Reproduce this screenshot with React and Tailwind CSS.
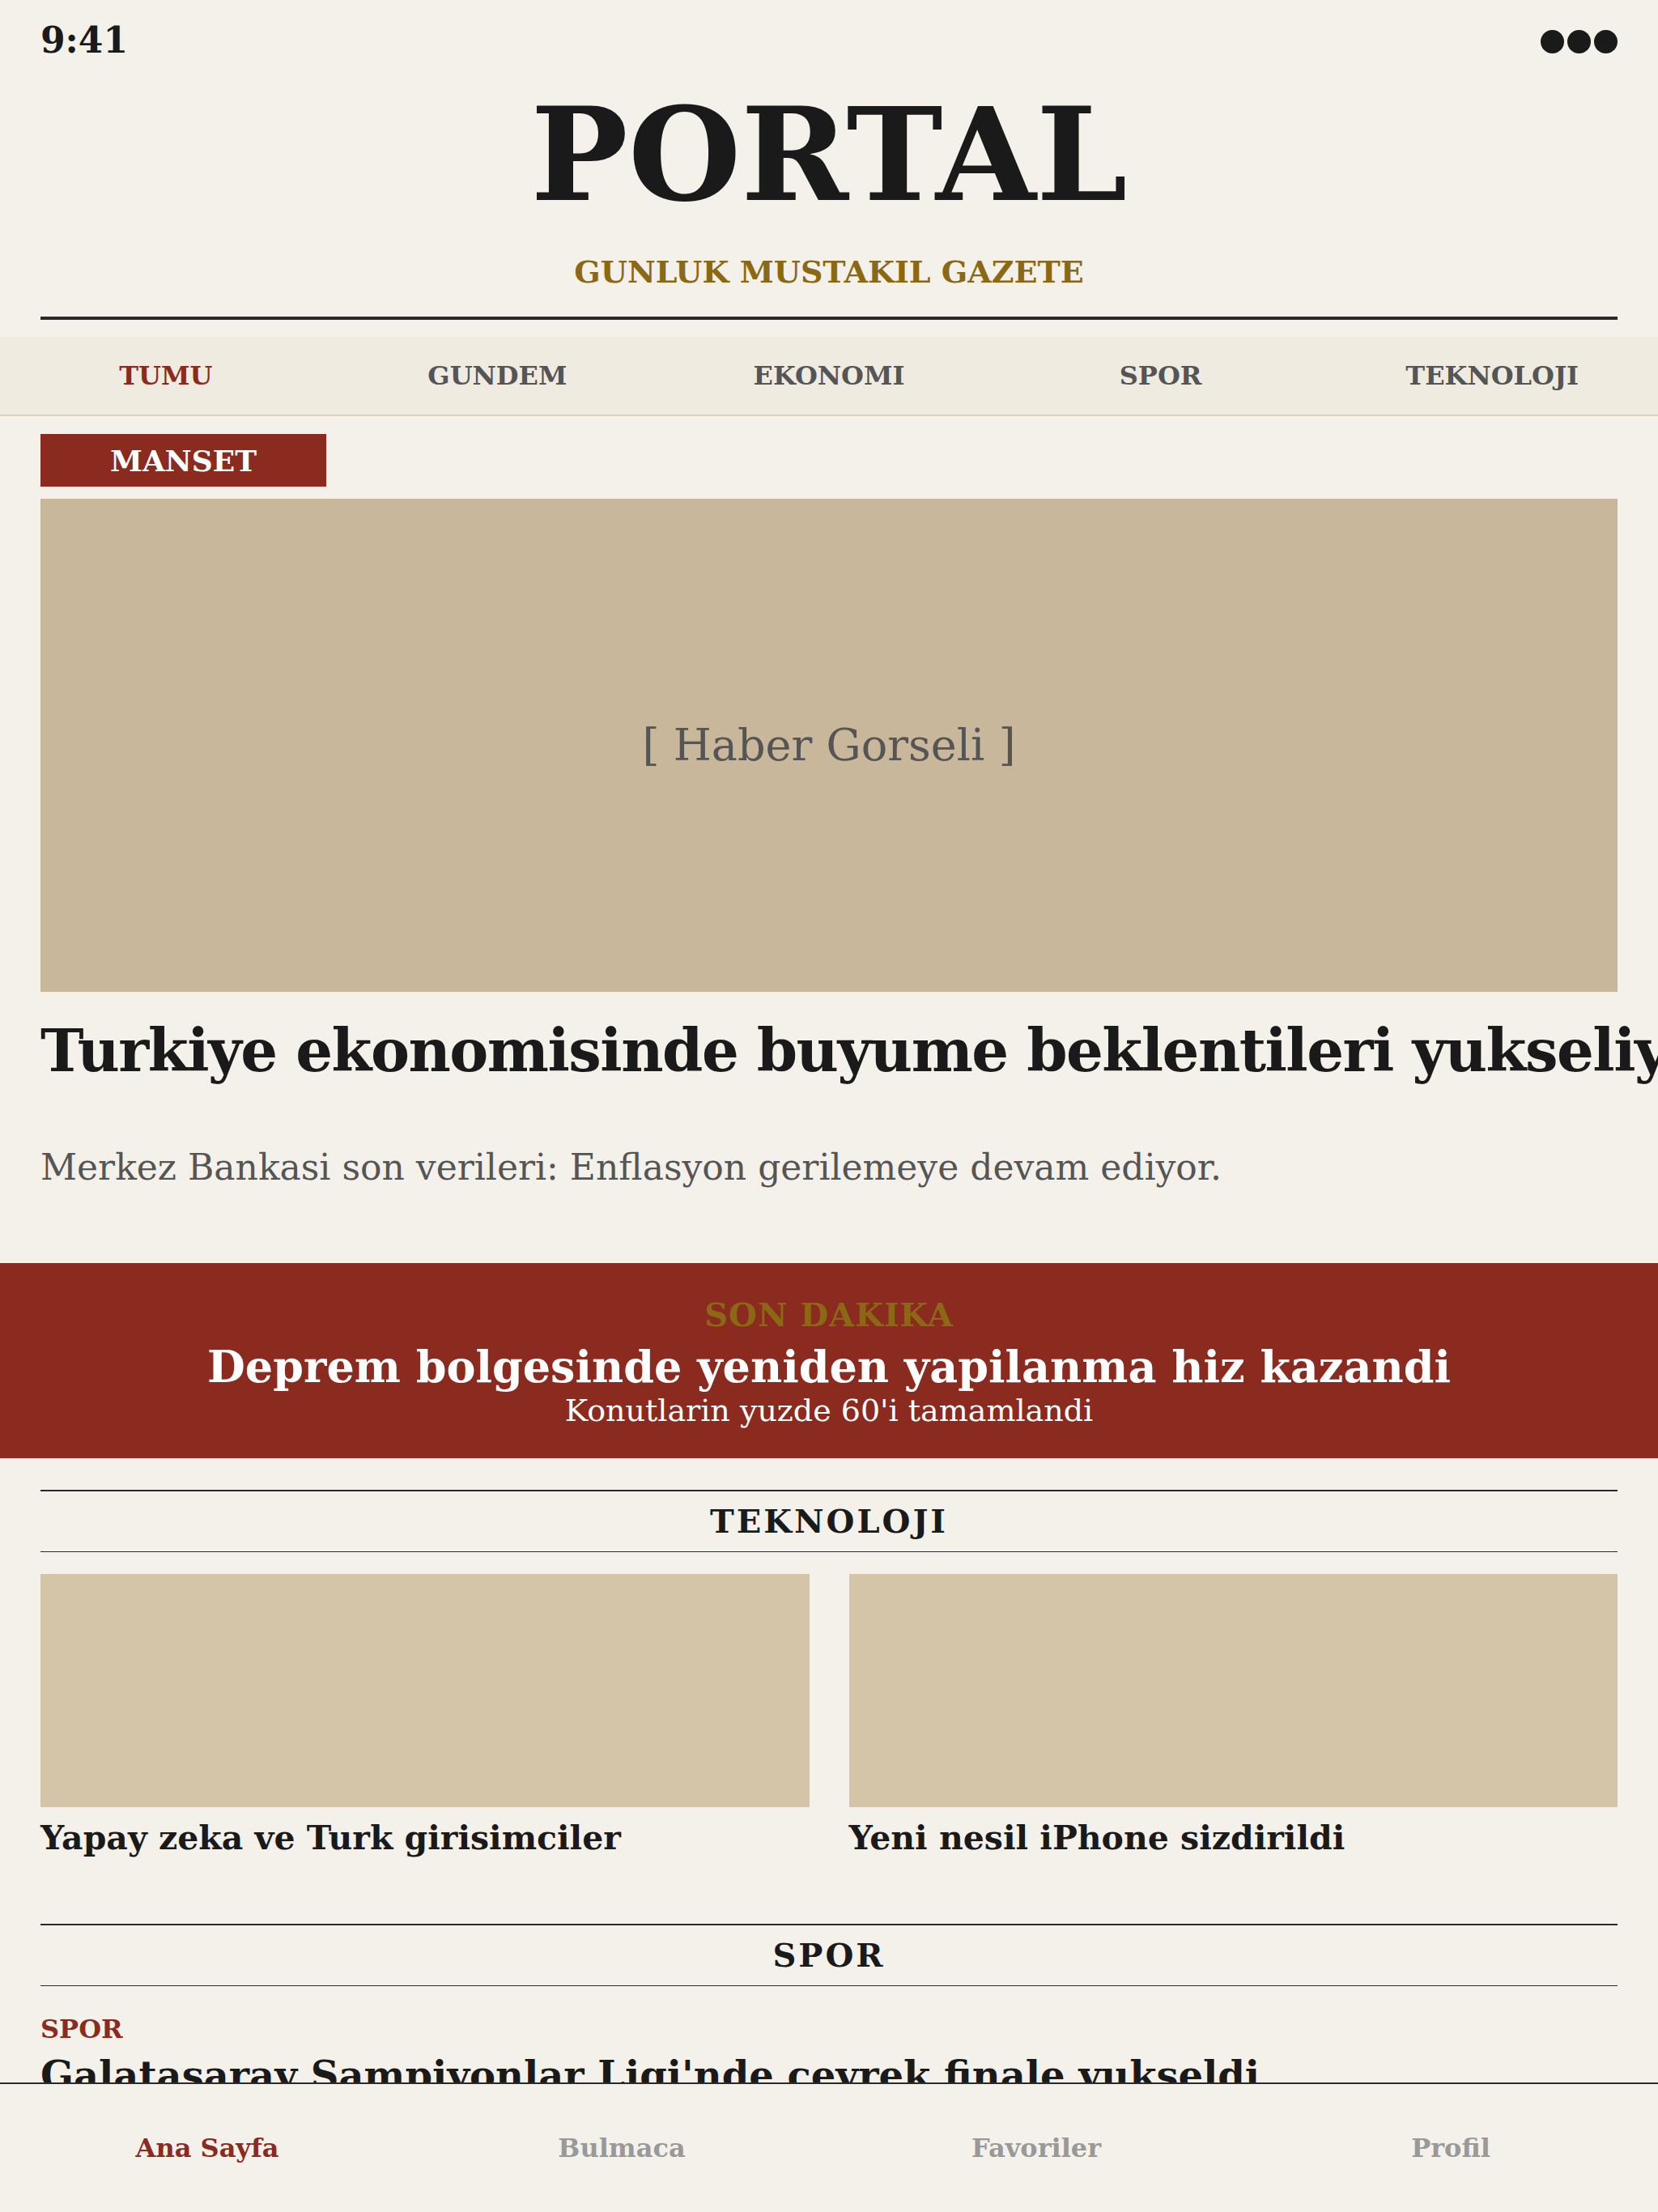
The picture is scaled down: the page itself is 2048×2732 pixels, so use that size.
import React from "react";

const navItems = ["TUMU", "GUNDEM", "EKONOMI", "SPOR", "TEKNOLOJI"];
const bottomItems = ["Ana Sayfa", "Bulmaca", "Favoriler", "Profil"];

export default function App() {
  return (
    <div className="relative h-[2732px] w-full overflow-hidden bg-[#f4f1ea] font-['DejaVu_Serif',serif] text-[#1a1a1a]">
      {/* Status bar */}
      <div className="flex items-start justify-between px-[50px] pt-[28px]">
        <span className="text-[44px] font-bold leading-none">9:41</span>
        <div className="mt-[9px] flex gap-[4px]">
          <div className="h-[29px] w-[29px] rounded-full bg-[#1a1a1a]" />
          <div className="h-[29px] w-[29px] rounded-full bg-[#1a1a1a]" />
          <div className="h-[29px] w-[29px] rounded-full bg-[#1a1a1a]" />
        </div>
      </div>

      {/* Masthead */}
      <div className="px-[50px]">
        <h1 className="mt-[39px] text-center text-[160px] font-bold leading-none">PORTAL</h1>
        <p className="mt-[46px] text-center text-[38px] font-bold leading-none text-[#8b6914]">
          GUNLUK MUSTAKIL GAZETE
        </p>
        <div className="mt-[36px] h-[4px] bg-[#2a2a2a]" />
      </div>

      {/* Category nav */}
      <nav className="mt-[21px] flex h-[98px] border-b-2 border-[#ddd3bd] bg-[#efebe1]">
        {navItems.map((item, i) => (
          <div
            key={item}
            className={
              "flex flex-1 items-center justify-center text-[32px] font-bold leading-none " +
              (i === 0 ? "text-[#8b2b20]" : "text-[#555555]")
            }
          >
            {item}
          </div>
        ))}
      </nav>

      {/* Headline story */}
      <div className="px-[50px]">
        <div className="mt-[22px] flex h-[65px] w-[353px] items-center justify-center bg-[#8b2b20] text-[36px] font-bold leading-none text-white">
          MANSET
        </div>
        <div className="mt-[15px] flex h-[609px] items-center justify-center bg-[#c8b79b] text-[54px] leading-none text-[#555555]">
          [ Haber Gorseli ]
        </div>
        <h2 className="mt-[37px] whitespace-nowrap text-[72px] font-bold leading-none tracking-[-1.5px]">
          Turkiye ekonomisinde buyume beklentileri yukseliyor
        </h2>
        <p className="mt-[86px] text-[44px] leading-none text-[#555555]">
          Merkez Bankasi son verileri: Enflasyon gerilemeye devam ediyor.
        </p>
      </div>

      {/* Breaking news */}
      <div className="mt-[96px] flex flex-col items-center bg-[#8b2b20] pb-[40px] pt-[44px] text-center">
        <div className="text-[40px] font-bold leading-none tracking-[1px] text-[#8b6914]">SON DAKIKA</div>
        <div className="mt-[17px] text-[54px] font-bold leading-none text-white">
          Deprem bolgesinde yeniden yapilanma hiz kazandi
        </div>
        <div className="mt-[8px] text-[38px] leading-none text-white">Konutlarin yuzde 60'i tamamlandi</div>
      </div>

      {/* Teknoloji */}
      <div className="px-[50px]">
        <div className="mt-[39px] border-b border-t-2 border-[#2a2a2a] py-[17px] text-center text-[40px] font-bold leading-none tracking-[3px]">
          TEKNOLOJI
        </div>
        <div className="mt-[27px] grid grid-cols-2 gap-[49px]">
          <div>
            <div className="h-[288px] bg-[#d4c4a8]" />
            <div className="mt-[18px] text-[41px] font-bold leading-none">Yapay zeka ve Turk girisimciler</div>
          </div>
          <div>
            <div className="h-[288px] bg-[#d4c4a8]" />
            <div className="mt-[18px] text-[41px] font-bold leading-none">Yeni nesil iPhone sizdirildi</div>
          </div>
        </div>

        {/* Spor */}
        <div className="mt-[85px] border-b border-t-2 border-[#2a2a2a] py-[17px] text-center text-[40px] font-bold leading-none tracking-[3px]">
          SPOR
        </div>
        <div className="mt-[37px] text-[32px] font-bold leading-none text-[#8b2b20]">SPOR</div>
        <div className="mt-[17px] whitespace-nowrap text-[48px] font-bold leading-none">
          Galatasaray Sampiyonlar Ligi'nde ceyrek finale yukseldi
        </div>
      </div>

      {/* Bottom tab bar */}
      <div className="absolute bottom-0 left-0 right-0 flex h-[160px] border-t-2 border-[#2a2a2a] bg-[#f4f1ea]">
        {bottomItems.map((item, i) => (
          <div
            key={item}
            className={
              "flex flex-1 items-center justify-center text-[32px] font-bold leading-none " +
              (i === 0 ? "text-[#8b2b20]" : "text-[#999999]")
            }
          >
            {item}
          </div>
        ))}
      </div>
    </div>
  );
}
